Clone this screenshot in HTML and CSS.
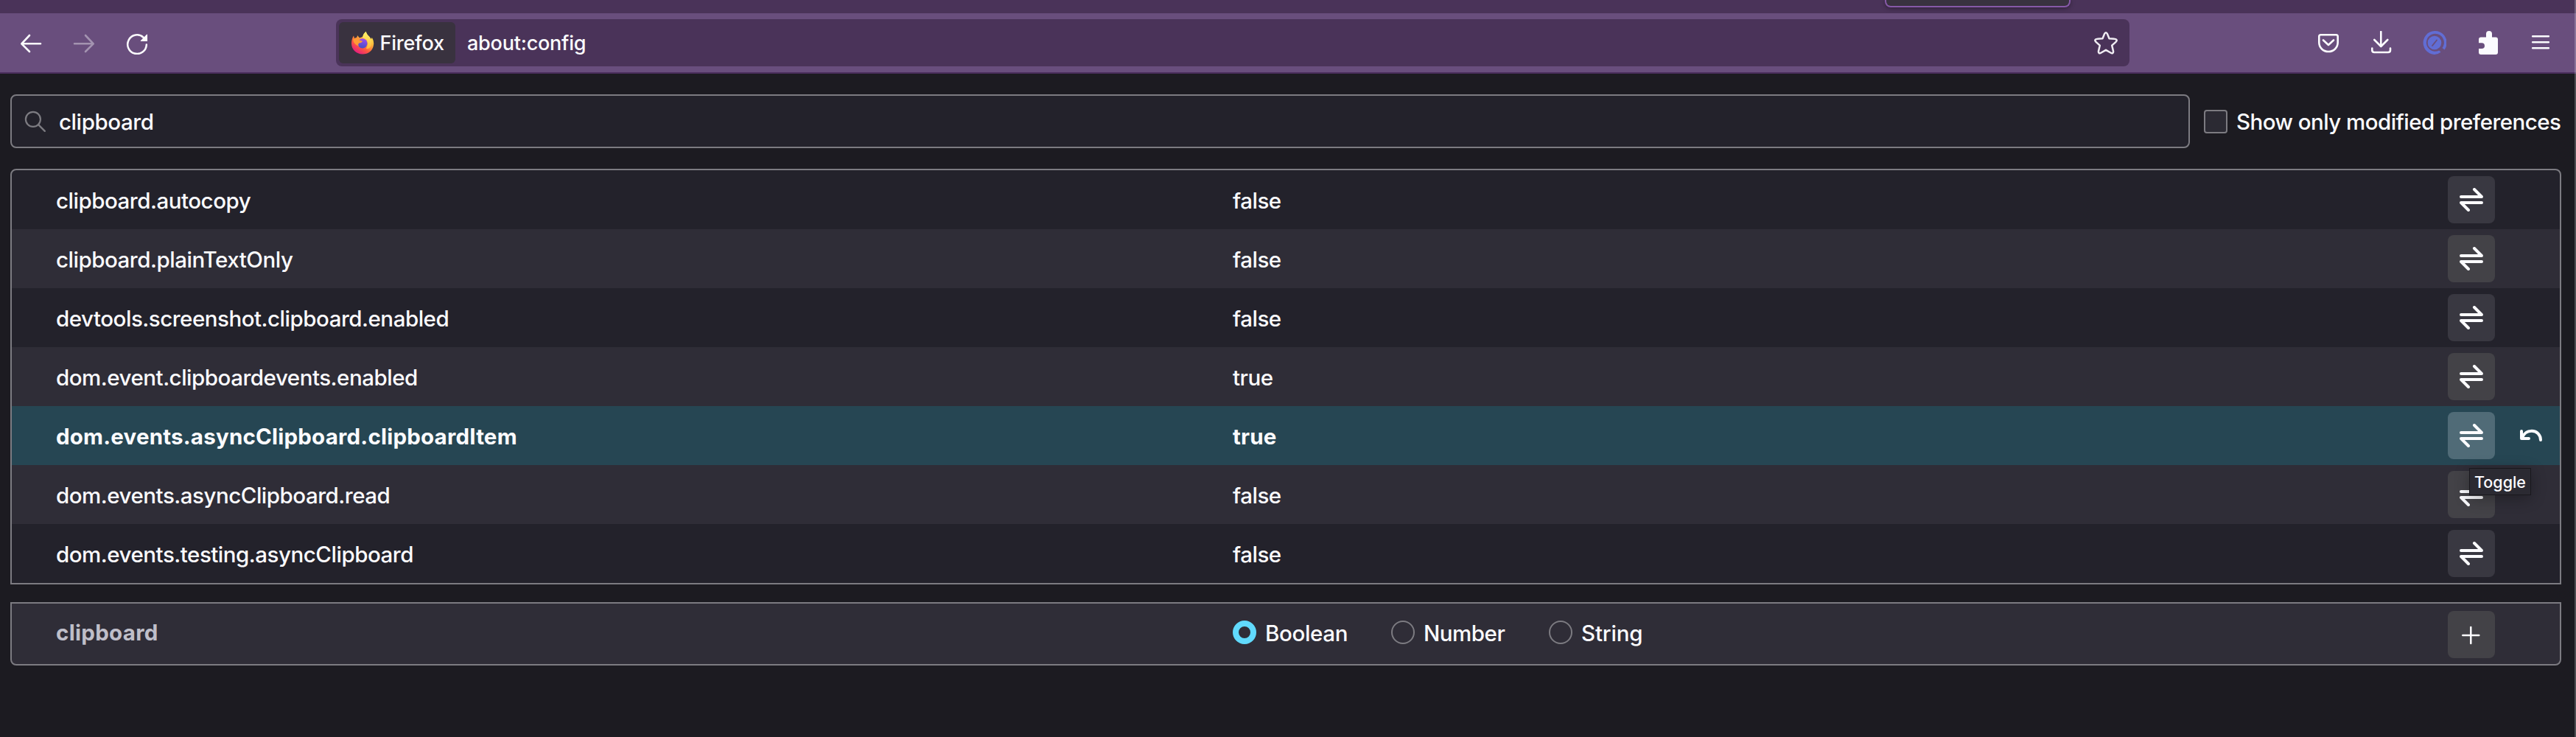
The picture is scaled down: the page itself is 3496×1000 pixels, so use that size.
FILE: index.html
```html
<!DOCTYPE html>
<html lang="en">
<head>
<meta charset="utf-8">
<title>about:config</title>
<link rel="stylesheet" href="styles.css">
</head>
<body>
<svg class="defs" width="0" height="0" aria-hidden="true">
  <symbol id="toggle" viewBox="0 0 32 32"><path d="M2 12H30L20 2M30 20H2L12 30" fill="none" stroke="currentColor" stroke-width="4" stroke-linecap="round" stroke-linejoin="round"/></symbol>
</svg>
<div class="window">
  <header class="tabstrip"><div class="tab"></div></header>
  <nav class="toolbar">
    <div class="nav-buttons">
      <svg class="icon" viewBox="0 0 32 32"><path d="M29 17.3H3.5M14 6L3.3 17.3 14 28" fill="none" stroke="currentColor" stroke-width="2.6" stroke-linecap="round" stroke-linejoin="round"/></svg>
      <svg class="icon disabled" viewBox="0 0 32 32"><path d="M3 17.3H28.5M18 6L28.7 17.3 18 28" fill="none" stroke="currentColor" stroke-width="2.6" stroke-linecap="round" stroke-linejoin="round"/></svg>
      <svg class="icon" viewBox="0 0 32 32"><path d="M24.6 8.7A12.8 12.8 0 1 0 28.8 18.6" fill="none" stroke="currentColor" stroke-width="2.5" stroke-linecap="round"/><path d="M30 5.2V14H21.2Q20.2 14 21 13L28.8 5Q30 4 30 5.2Z" fill="currentColor"/></svg>
    </div>
    <div class="urlbar">
      <div class="identity">
        <svg class="firefox" viewBox="0 0 32 32">
          <defs>
            <linearGradient id="body" x1=".85" y1=".1" x2=".25" y2="1"><stop offset="0" stop-color="#fff04f"/><stop offset=".35" stop-color="#ffb13b"/><stop offset=".65" stop-color="#ff5a3e"/><stop offset="1" stop-color="#e31587"/></linearGradient>
            <linearGradient id="globe" x1=".6" y1="0" x2=".4" y2="1"><stop offset="0" stop-color="#a04cf0"/><stop offset="1" stop-color="#4250c4"/></linearGradient>
            <linearGradient id="flame" x1=".5" y1="0" x2=".5" y2="1"><stop offset="0" stop-color="#fff36b"/><stop offset="1" stop-color="#ffb83d"/></linearGradient>
          </defs>
          <path d="M4 6.5L5 10 8.5 8.5 9 6 12 9.5 16 8Q17 3.5 20.8.8 21 4 25 7.5L27.5 11 28.8 9Q31.8 14 31 19C30 27 23.500 31.500 16 31.500 7.500 31.500 1 25 1 17 1 12.500 2.300 9 4 6.500Z" fill="url(#body)"/>
          <path d="M16 9Q17 3.500 20.800.800 21 4 25 7.500 29.500 12 28 19 26 25 21 24 24.500 17 21.500 12Z" fill="url(#flame)"/>
          <circle cx="16" cy="16.800" r="6.600" fill="url(#globe)"/>
          <path d="M3 11Q8 8.500 12 12.500L16 13.800Q15 16.500 11 16.500 9.500 18.500 11 20.500 4 19 3 11Z" fill="#ff9a35"/>
        </svg>
        <span>Firefox</span>
      </div>
      <span class="url">about:config</span>
      <svg class="icon star" viewBox="0 0 32 32"><path d="M16 2.200C17.200 2.200 17.600 3.200 18 4.100L20.500 10.200 27.500 10.800C31 11 31.700 13 29.300 15.100L24.200 19.600 25.900 26.900C26.600 29.900 24.800 31 22.400 29.500L16 25.800 9.600 29.500C7.200 31 5.400 29.900 6.100 26.900L7.800 19.600 2.700 15.100C.300 13 1 11 4.500 10.800L11.500 10.200 14 4.100C14.400 3.200 14.800 2.200 16 2.200Z" fill="none" stroke="currentColor" stroke-width="2.500" stroke-linejoin="round"/></svg>
    </div>
    <div class="tools">
      <svg class="icon" viewBox="0 0 32 32"><path d="M5.500 5.300H26.500Q28.700 5.300 28.700 7.500V15.500C28.700 22.800 23 28 16 28 9 28 3.300 22.800 3.300 15.500V7.500Q3.300 5.300 5.500 5.300ZM9 12.500L16 19 23 12.500" fill="none" stroke="currentColor" stroke-width="2.600" stroke-linecap="round" stroke-linejoin="round"/></svg>
      <svg class="icon" viewBox="0 0 32 32"><path d="M15.300 1V20M6.300 12L15.300 21 24.300 12M3.300 23.500V26Q3.300 29 6.300 29H25Q28 29 28 26V23.500" fill="none" stroke="currentColor" stroke-width="2.600" stroke-linecap="round" stroke-linejoin="round"/></svg>
      <svg class="icon blue" viewBox="0 0 32 32"><path d="M24.600 28.700A15.300 15.300 0 0 1 16 32 16 16 0 1 1 29.500 25.500L26.500 23A12 12 0 1 0 22.300 26.500Z" fill="currentColor"/><circle cx="16" cy="16" r="9.300" fill="currentColor"/><path d="M13 20L19 12.500" stroke="#694e7d" stroke-width="1.800" stroke-linecap="round"/></svg>
      <svg class="icon" viewBox="0 0 32 32"><path d="M10 8.500H14V4Q14 0 18 0T22 4V8.500H27Q30 8.500 30 11.500V29Q30 32 27 32H7Q4 32 4 29V24H8Q12 24 12 20.200T8 16.200H4V11.500Q4 8.500 7 8.500Z" fill="currentColor"/></svg>
      <svg class="icon" viewBox="0 0 32 32"><path d="M5.200 7.300H26.800M5.200 15.300H26.800M5.200 23.300H26.800" stroke="currentColor" stroke-width="2.600" stroke-linecap="round"/></svg>
    </div>
  </nav>

  <main class="page">
    <div class="searchrow">
      <div class="search">
        <svg class="icon" viewBox="0 0 32 32"><circle cx="12.900" cy="12.900" r="10" fill="none" stroke="currentColor" stroke-width="2.200"/><path d="M20.300 20.300L28.800 28.800" stroke="currentColor" stroke-width="2.400" stroke-linecap="round"/></svg>
        <span class="query">clipboard</span>
      </div>
      <label class="modified"><i class="checkbox"></i><span>Show only modified preferences</span></label>
    </div>

    <section class="prefs">
      <div class="row"><span class="name">clipboard.autocopy</span><span class="value">false</span><b class="button"><svg class="icon"><use href="#toggle"/></svg></b></div>
      <div class="row"><span class="name">clipboard.plainTextOnly</span><span class="value">false</span><b class="button"><svg class="icon"><use href="#toggle"/></svg></b></div>
      <div class="row"><span class="name">devtools.screenshot.clipboard.enabled</span><span class="value">false</span><b class="button"><svg class="icon"><use href="#toggle"/></svg></b></div>
      <div class="row"><span class="name">dom.event.clipboardevents.enabled</span><span class="value">true</span><b class="button"><svg class="icon"><use href="#toggle"/></svg></b></div>
      <div class="row changed"><span class="name">dom.events.asyncClipboard.clipboardItem</span><span class="value">true</span><b class="button"><svg class="icon"><use href="#toggle"/></svg><span class="tooltip">Toggle</span></b>
        <b class="reset"><svg class="icon" viewBox="0 0 32 32"><path d="M2 10V20H12M2.500 19.500C5 13 10 9.800 16 9.800 23 9.800 28 15 28 22" fill="none" stroke="currentColor" stroke-width="4" stroke-linecap="round" stroke-linejoin="round"/></svg></b></div>
      <div class="row"><span class="name">dom.events.asyncClipboard.read</span><span class="value">false</span><b class="button"><svg class="icon"><use href="#toggle"/></svg></b></div>
      <div class="row"><span class="name">dom.events.testing.asyncClipboard</span><span class="value">false</span><b class="button"><svg class="icon"><use href="#toggle"/></svg></b></div>
    </section>

    <section class="add">
      <span class="name">clipboard</span>
      <div class="types">
        <label class="type"><i class="radio on"></i><span class="boolean">Boolean</span></label>
        <label class="type"><i class="radio"></i><span class="number">Number</span></label>
        <label class="type"><i class="radio"></i><span class="string">String</span></label>
      </div>
      <b class="button"><svg class="icon" viewBox="0 0 32 32"><path d="M15.300 6V28M4.300 17H26.300" stroke="currentColor" stroke-width="2.500" stroke-linecap="round"/></svg></b>
    </section>
  </main>
</div>
</body>
</html>
```
FILE: styles.css
```css
* { box-sizing: border-box; }
body {
  margin: 0;
  background: #1c1b21;
  color: #fbfbfe;
  font: 500 29.5px/36px Inter, "Liberation Sans", sans-serif;
  letter-spacing: -0.48px;
  overflow: hidden;
}
.defs { position: absolute; }
.window { position: relative; height: 1000px; overflow: hidden; }
.window::after {
  content: "";
  position: absolute;
  top: 0;
  right: 0;
  width: 2px;
  height: 100%;
  background: rgba(255, 255, 255, .22);
}
.icon { display: block; flex: none; width: 32px; height: 32px; }

/* Browser chrome */
.tabstrip { display: flex; height: 18px; padding-left: 2558px; background: #4a3359; }
.tab {
  width: 252px;
  height: 10px;
  border: 2px solid #8659a8;
  border-top: 0;
  border-radius: 0 0 8px 8px;
  background: #393240;
  box-shadow: 0 1px 6px rgba(0, 0, 0, .4);
}
.toolbar {
  display: flex;
  align-items: center;
  height: 82px;
  padding: 0 32px 0 26px;
  border-bottom: 2px solid #4a2f5d;
  background: #694e7d;
}
.nav-buttons { display: flex; gap: 40px; width: 430px; }
.disabled { opacity: .4; }
.urlbar {
  display: flex;
  align-items: center;
  width: 2434px;
  height: 64px;
  padding: 0 16px 0 4px;
  border-radius: 8px;
  background: #4a3359;
  font-size: 27px;
  letter-spacing: -.22px;
}
.identity {
  display: flex;
  align-items: center;
  gap: 7.5px;
  width: 158px;
  height: 56px;
  padding-left: 16px;
  border-radius: 6px;
  background: #39323f;
}
.identity span, .url { padding-top: 2px; }
.firefox { width: 32px; height: 32px; }
.url { flex: 1; padding-left: 16px; }
.star { color: #efecf2; }
.tools { display: flex; gap: 40px; margin-left: auto; }
.blue { color: #616dd4; }

/* Search */
.page { padding: 28px 16px 0 14px; }
.searchrow { display: flex; align-items: center; }
.search {
  display: flex;
  flex: none;
  align-items: center;
  gap: 16px;
  width: 2958px;
  height: 73px;
  padding-left: 16px;
  border: 2px solid #7c7b81;
  border-radius: 8px;
  background: #23222b;
}
.search .icon { color: #7c7b81; }
.query { padding-top: 1px; letter-spacing: -.42px; }
.modified { display: flex; flex: none; align-items: center; gap: 12px; margin-left: 19px; letter-spacing: -.54px; white-space: nowrap; }
.modified span { padding-top: 1px; }
.checkbox { flex: none; width: 32px; height: 32px; border: 2px solid #7c7b81; border-radius: 4px; background: #2b2a33; }

/* Preference list */
.prefs, .add { width: 3462px; border: 2px solid #7c7b81; }
.prefs {
  margin-top: 28px;
  border-radius: 8px 8px 0 0;
  background: #23222b;
}
.row { display: flex; align-items: center; height: 80px; }
.row:nth-child(even) { background: #2f2d37; }
.row.changed { background: #264653; font-weight: 700; letter-spacing: .21px; }
.name { width: 1657px; padding: 2px 0 0 60px; }
.value { width: 1649px; padding-top: 2px; }
.button {
  position: relative;
  display: flex;
  align-items: center;
  justify-content: center;
  width: 64px;
  height: 64px;
  border-radius: 8px;
  background: #393841;
}
.row:nth-child(even) .button, .add .button { background: #434247; }
.row.changed .button { background: #506b77; }
.reset { display: flex; margin-left: 34px; }
.tooltip {
  position: absolute;
  z-index: 1;
  left: 29px;
  top: 76px;
  width: 84px;
  height: 37px;
  border: 1px solid #19181d;
  background: #2b2a32;
  box-shadow: 0 4px 20px rgba(0, 0, 0, .3);
  font-size: 21.5px;
  line-height: 36px;
  font-weight: 500;
  letter-spacing: 0;
  text-align: center;
}

/* New preference */
.add {
  display: flex;
  align-items: center;
  height: 86px;
  margin-top: 24px;
  border-radius: 0 0 8px 8px;
  background: #2f2d37;
}
.add .name { padding: 0 0 4px 60px; color: #bfbfc9; font-weight: 700; letter-spacing: .3px; }
.types { display: flex; width: 1649px; padding-bottom: 4px; }
.type { display: flex; align-items: center; gap: 12px; }
.type span { padding-top: 2px; }
.boolean { width: 171px; letter-spacing: -.35px; }
.number { width: 170px; }
.string { letter-spacing: -.15px; }
.radio { width: 32px; height: 32px; border: 2px solid #7c7b81; border-radius: 50%; }
.radio.on { border: 8px solid #61dafd; }
.add .button { margin-top: 2px; }
```
